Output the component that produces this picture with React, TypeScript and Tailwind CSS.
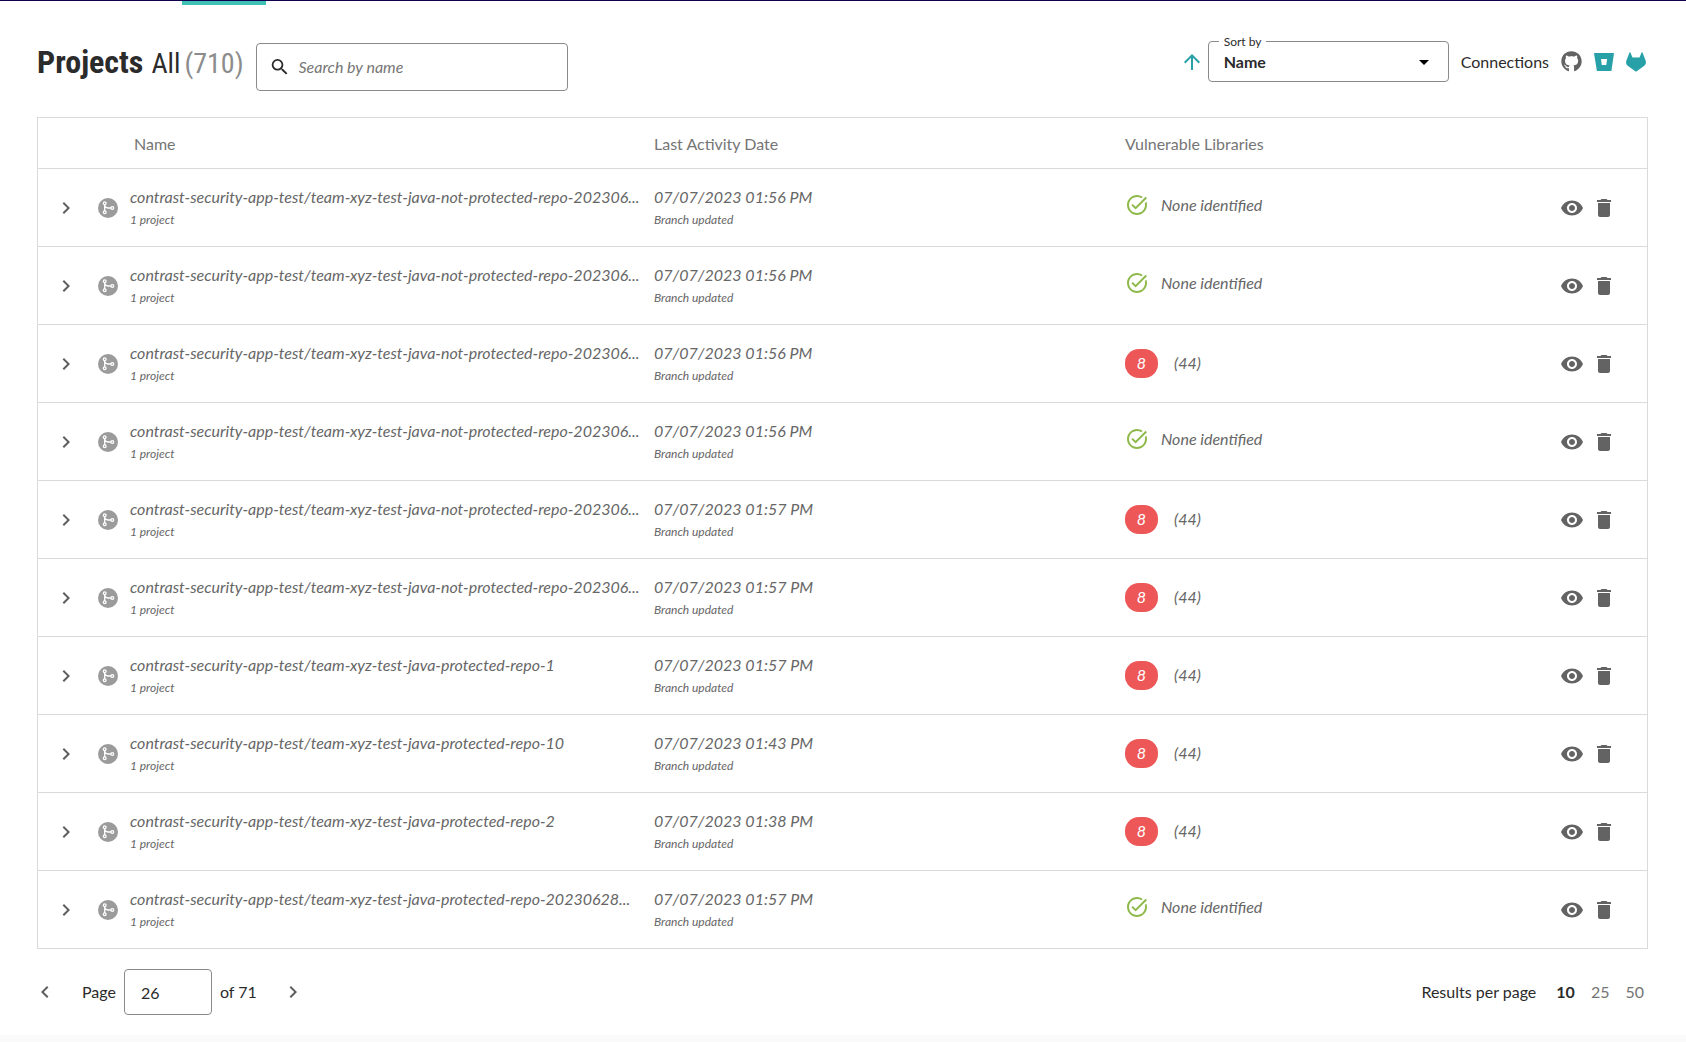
import { useState } from "react";
import {
  MdArrowDropDown,
  MdArrowUpward,
  MdChevronLeft,
  MdChevronRight,
  MdDelete,
  MdSearch,
  MdTaskAlt,
  MdVisibility,
} from "react-icons/md";
import { FaGithub } from "react-icons/fa";

interface Project {
  name: string;
  date: string;
  vulnerable: boolean;
}

const LONG_NAME =
  "contrast-security-app-test/team-xyz-test-java-not-protected-repo-202306...";
const PREFIX = "contrast-security-app-test/team-xyz-test-java-protected-repo-";

const projects: Project[] = [
  { name: LONG_NAME, date: "07/07/2023 01:56 PM", vulnerable: false },
  { name: LONG_NAME, date: "07/07/2023 01:56 PM", vulnerable: false },
  { name: LONG_NAME, date: "07/07/2023 01:56 PM", vulnerable: true },
  { name: LONG_NAME, date: "07/07/2023 01:56 PM", vulnerable: false },
  { name: LONG_NAME, date: "07/07/2023 01:57 PM", vulnerable: true },
  { name: LONG_NAME, date: "07/07/2023 01:57 PM", vulnerable: true },
  { name: PREFIX + "1", date: "07/07/2023 01:57 PM", vulnerable: true },
  { name: PREFIX + "10", date: "07/07/2023 01:43 PM", vulnerable: true },
  { name: PREFIX + "2", date: "07/07/2023 01:38 PM", vulnerable: true },
  { name: PREFIX + "20230628...", date: "07/07/2023 01:57 PM", vulnerable: false },
];

function BranchIcon() {
  return (
    <svg className="size-5" viewBox="0 0 20 20" fill="none" aria-hidden="true">
      <circle cx="10" cy="10" r="10" fill="#9b9b9b" />
      <g stroke="#fff" strokeWidth="1.3">
        <circle cx="6.7" cy="5.3" r="1.4" />
        <circle cx="6.7" cy="14.3" r="1.4" />
        <circle cx="14.3" cy="10" r="1.4" />
        <path d="M6.7 6.7v6.200M6.700 7c.3 2 1.500 3 3.300 3h2.900" />
      </g>
    </svg>
  );
}

function BitbucketIcon() {
  return (
    <svg className="size-5" viewBox="0 0 20 20" aria-hidden="true">
      <path
        fill="#27a0a8"
        fillRule="evenodd"
        d="M0 1h20l-2.600 18H2.900zM7 7l.8 6h4.500l.8-6z"
      />
    </svg>
  );
}

function GitlabIcon() {
  return (
    <svg className="size-5" viewBox="0 0 20 20" aria-hidden="true">
      <path
        fill="#27a0a8"
        d="M3.500.5c.3-.4.700-.3.900.1L6.500 5.500h7L15.600.6c.2-.4.700-.5.900-.1L19.600 8.500c.7 2 .2 4-1.300 5.200L10 19.700 1.700 13.700C.2 12.500-.3 10.500.4 8.500z"
      />
    </svg>
  );
}

function ProjectRow({ project }: { project: Project }) {
  return (
    <tr className="h-[78px] border-b border-[#dadada] italic last:border-b-0">
      <td className="pt-0.5 pl-4">
        <button className="block text-[#5f5f5f]" aria-label="Expand">
          <MdChevronRight size={24} />
        </button>
      </td>
      <td className="pt-0.5">
        <BranchIcon />
      </td>
      <td className="align-top">
        <p className="truncate pt-4 leading-6">{project.name}</p>
        <p className="text-xs leading-[22px]">1 project</p>
      </td>
      <td className="align-top">
        <p className="pt-4 leading-6">{project.date}</p>
        <p className="text-xs leading-[22px]">Branch updated</p>
      </td>
      <td>
        {project.vulnerable ? (
          <div className="flex items-center gap-4">
            <span className="flex h-[29px] w-[33px] items-center justify-center rounded-[14px] bg-[#ed5757] text-white">
              8
            </span>
            <span>(44)</span>
          </div>
        ) : (
          <div className="flex items-center gap-3 pb-1">
            <MdTaskAlt size={24} className="text-[#8fb94b]" />
            <span>None identified</span>
          </div>
        )}
      </td>
      <td className="pt-0.5">
        <div className="flex justify-end gap-2 pr-[31px] text-[#636363]">
          <button aria-label="View">
            <MdVisibility size={24} />
          </button>
          <button aria-label="Delete">
            <MdDelete size={24} />
          </button>
        </div>
      </td>
    </tr>
  );
}

export default function App() {
  const [page, setPage] = useState("26");

  return (
    <div className="bg-white font-[Lato,sans-serif] text-base text-[#2b2b2b]">
      <div className="h-[5px] border-t border-[#12004f]">
        <div className="ml-[182px] h-1 w-[84px] bg-[#3fc1b5]" />
      </div>

      <main className="pr-[38px] pl-[37px]">
        <header className="flex h-28 items-start justify-between pt-9">
          <div className="flex">
            <h1 className="flex h-12 w-[219px] items-baseline gap-2 font-['Roboto_Condensed',Roboto,sans-serif] text-[28px] leading-[42px] whitespace-nowrap">
              <span className="text-[32px] font-bold">Projects</span>
              <span className="flex gap-1">
                <span>All</span>
                <span className="text-[#8c8c8c]">(710)</span>
              </span>
            </h1>
            <label className="mt-0.5 flex h-12 w-[312px] items-center gap-2 rounded border border-[#8a8a8a] px-3">
              <MdSearch size={24} />
              <input
                type="search"
                aria-label="Search by name"
                placeholder="Search by name"
                className="w-full outline-none placeholder:text-[#757575] placeholder:italic"
              />
            </label>
          </div>

          <div className="flex items-center pr-0.5">
            <button className="mr-1 text-[#27a0a8]" aria-label="Sort direction">
              <MdArrowUpward size={24} />
            </button>
            <div className="relative h-[41px] w-[241px] rounded border border-[#8a8a8a]">
              <label
                htmlFor="sort"
                className="absolute -top-2 left-2.5 bg-white px-[5px] text-xs leading-4"
              >
                Sort by
              </label>
              <select
                id="sort"
                className="h-full w-full appearance-none bg-transparent px-[15px] font-bold outline-none"
              >
                <option>Name</option>
                <option>Last Activity Date</option>
              </select>
              <MdArrowDropDown
                size={24}
                className="pointer-events-none absolute top-2 right-3 text-black"
              />
            </div>
            <span className="mx-3">Connections</span>
            <div className="flex items-center gap-3">
              <FaGithub size={21} className="text-[#636363]" />
              <BitbucketIcon />
              <GitlabIcon />
            </div>
          </div>
        </header>

        <div className="border border-[#dadada]">
          <table className="w-full table-fixed border-collapse text-left text-[#666]">
            <colgroup>
              <col className="w-[60px]" />
              <col className="w-8" />
              <col className="w-[524px]" />
              <col className="w-[471px]" />
              <col />
              <col className="w-40" />
            </colgroup>
            <thead>
              <tr className="h-[50px] border-b border-[#dadada] text-[#757575]">
                <td />
                <td />
                <th className="pt-0.5 pl-1 font-normal">Name</th>
                <th className="pt-0.5 font-normal">Last Activity Date</th>
                <th className="pt-0.5 font-normal">Vulnerable Libraries</th>
                <td />
              </tr>
            </thead>
            <tbody>
              {projects.map((project, index) => (
                <ProjectRow key={index} project={project} />
              ))}
            </tbody>
          </table>
        </div>

        <footer className="flex items-center justify-between pt-5 pb-5">
          <div className="flex items-center">
            <button className="-ml-1 text-[#5f5f5f]" aria-label="Previous page">
              <MdChevronLeft size={24} />
            </button>
            <label htmlFor="page" className="ml-[25px]">
              Page
            </label>
            <input
              id="page"
              value={page}
              onChange={(e) => setPage(e.target.value)}
              className="mx-2 h-[46px] w-[88px] rounded border border-[#8a8a8a] px-4 outline-none"
            />
            <span>of 71</span>
            <button className="ml-6 text-[#5f5f5f]" aria-label="Next page">
              <MdChevronRight size={24} />
            </button>
          </div>
          <div className="flex items-center gap-4 pr-1">
            <span className="mr-1">Results per page</span>
            <button className="font-bold">10</button>
            <button className="text-[#757575]">25</button>
            <button className="text-[#757575]">50</button>
          </div>
        </footer>
      </main>
      <div className="h-[7px] bg-[#fafafa]" />
    </div>
  );
}
